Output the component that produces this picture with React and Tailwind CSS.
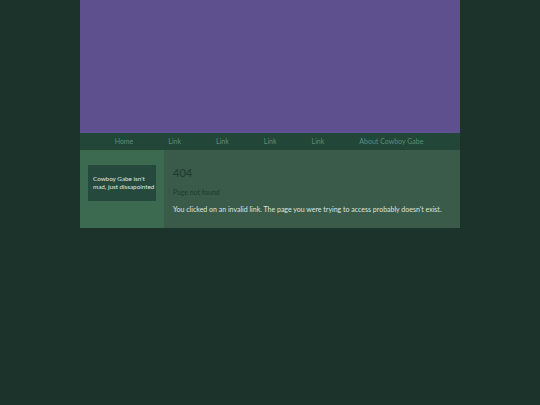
export default function App() {
  const links = ["Home", "Link", "Link", "Link", "Link", "About Cowboy Gabe"];
  return (
    <div className="min-h-[405px] w-full bg-[#1b332b]" style={{ fontFamily: "Lato, 'Open Sans', sans-serif" }}>
      <div className="mx-auto w-[380px]">
        <div className="h-[133px] bg-[#5e4f8f]" />
        <nav className="flex h-[17px] items-center justify-center gap-[35px] bg-[#224637] pr-[2px] text-[7px] text-[#5f8d76]">
          {links.map((l, i) => (
            <span key={i}>{l}</span>
          ))}
        </nav>
        <div className="flex h-[78px]">
          <aside className="w-[84px] bg-[#3b6a50] px-[8px] pt-[15px]">
            <div className="h-[36px] whitespace-nowrap bg-[#25493d] px-[5px] pt-[10px] text-[6.3px] leading-[8px] text-[#dfe9e2]">
              Cowboy Gabe isn't
              <br />
              mad, just dissapointed
            </div>
          </aside>
          <main className="flex-1 bg-[#3a5a4a] px-[9px] pt-[16px]">
            <div className="text-[11px] leading-[13px] text-[#1e3b2f]">404</div>
            <div className="mt-[9px] text-[7px] leading-[9px] text-[#1e3b2f]">Page not found</div>
            <div className="mt-[8px] text-[7px] leading-[9px] text-[#dce6df]">
              You clicked on an invalid link. The page you were trying to access probably doesn't exist.
            </div>
          </main>
        </div>
      </div>
    </div>
  );
}
